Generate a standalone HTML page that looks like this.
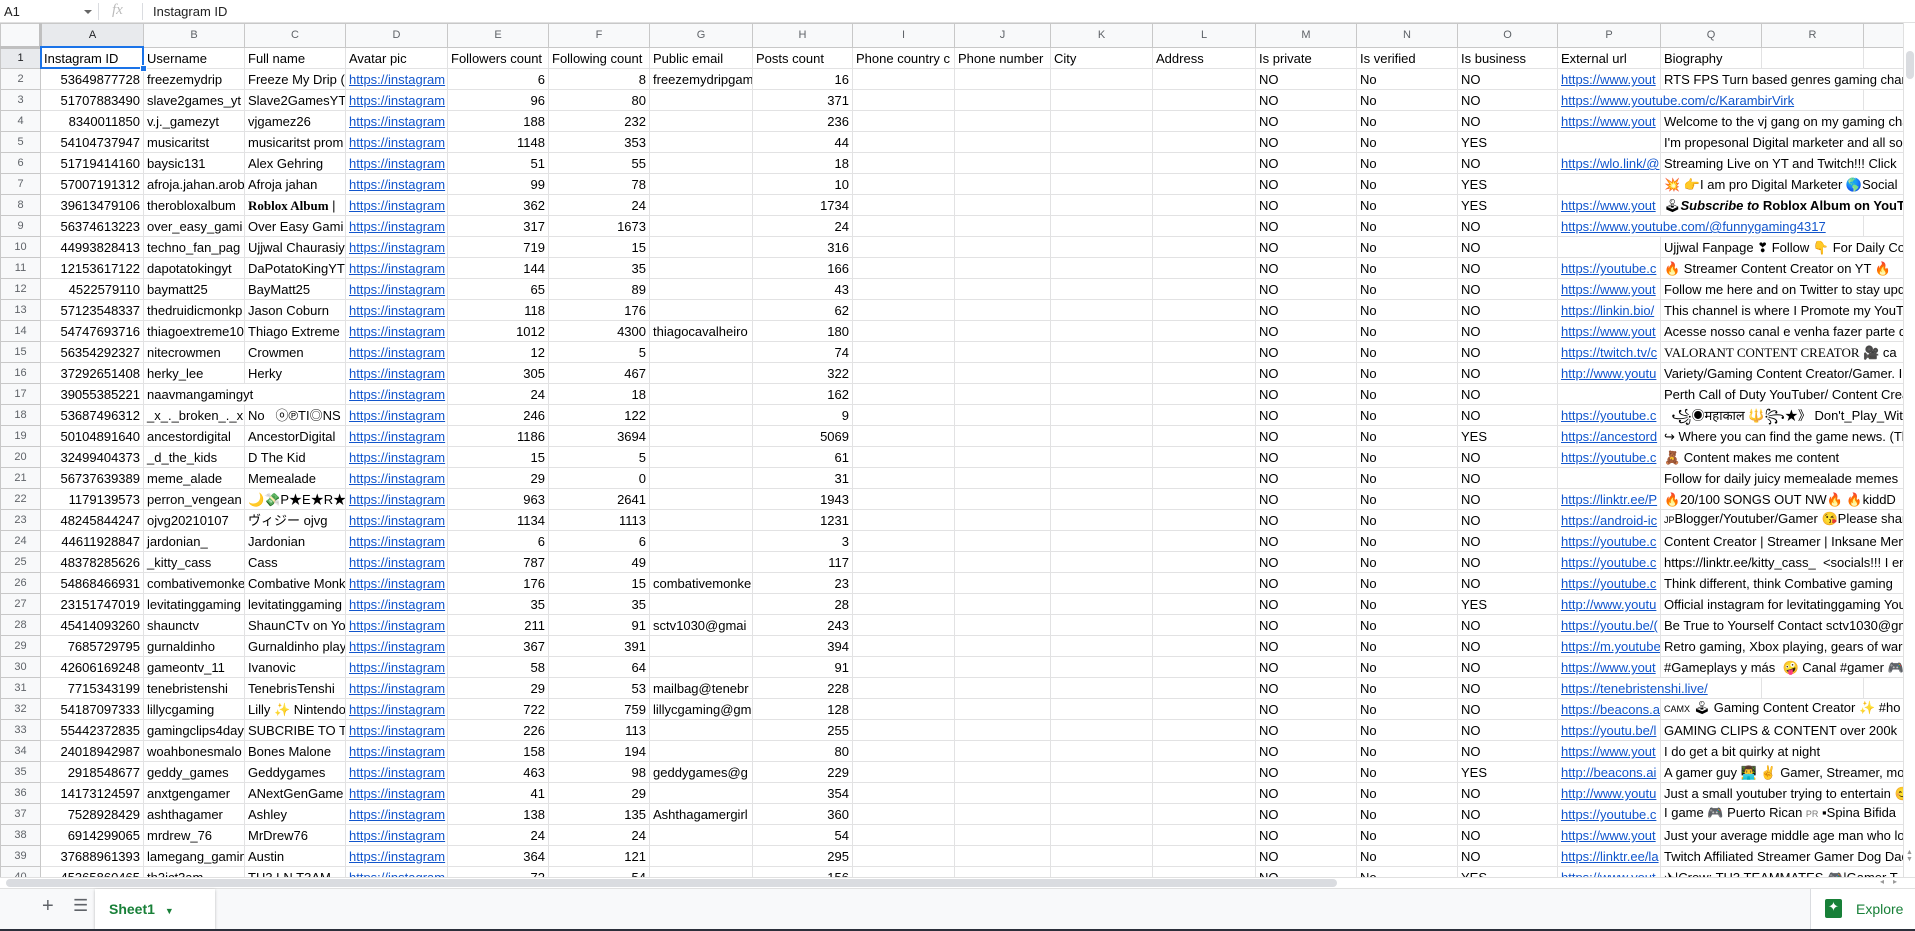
<!DOCTYPE html>
<html><head><meta charset="utf-8"><style>
*{box-sizing:border-box;margin:0;padding:0}
body{width:1915px;height:931px;overflow:hidden;background:#fff;font-family:"Liberation Sans","Noto Sans CJK JP",sans-serif;position:relative}
#fb{position:absolute;left:0;top:0;width:1915px;height:23px;border-bottom:1px solid #e0e0e0;font-size:13px;color:#222}
#fb .nm{position:absolute;left:4px;top:4px}
#fb .dd{position:absolute;left:84px;top:10px;border-left:4px solid transparent;border-right:4px solid transparent;border-top:4px solid #666}
#fb .s1{position:absolute;left:98px;top:3px;width:1px;height:17px;background:#dadce0}
#fb .fx{position:absolute;left:112px;top:2px;font-family:"Liberation Serif",serif;font-style:italic;color:#bbb;font-size:15px}
#fb .s2{position:absolute;left:142px;top:3px;width:1px;height:17px;background:#dadce0}
#fb .v{position:absolute;left:153px;top:4px}
#grid{position:absolute;left:0;top:23px;width:1903px;height:854px;overflow:hidden}
table{border-collapse:collapse;table-layout:fixed;width:1903px}
td,th{border:1px solid #e2e2e3;white-space:nowrap;overflow:hidden;font-size:13px;height:21px;padding:0 3px 1px;vertical-align:bottom;line-height:17px;color:#000;text-align:left;font-weight:normal}
th{background:#f8f9fa;color:#5f6368;font-size:11px;text-align:center;vertical-align:middle;border-color:#c8c8c8}
thead th{height:24px}
tbody th{padding:0}
th.sel{background:#e8eaed;color:#202124}
td.r{text-align:right}
td.l{color:#1155cc;text-decoration:underline}
.sv{font-family:"Liberation Serif",serif;font-weight:bold}
#a1{position:absolute;left:40px;top:46px;width:104px;height:23px;border:2px solid #1a73e8;pointer-events:none}
#a1 i{position:absolute;right:-5px;bottom:-5px;width:7px;height:7px;background:#1a73e8;border:1px solid #fff}
#vs{position:absolute;left:1903px;top:23px;width:12px;height:854px;background:#fff;border-left:1px solid #e0e0e0}
#vs .t{position:absolute;left:2px;top:28px;width:8px;height:28px;background:#dadce0;border-radius:4px}
#vs .u{position:absolute;left:2px;bottom:14px;color:#999;font-size:7px}
#hs{position:absolute;left:0;top:877px;width:1915px;height:11px;background:#fff;border-top:1px solid #e0e0e0}
#hs .t{position:absolute;left:6px;top:1px;width:1331px;height:8px;background:#dadce0;border-radius:4px}
#hs .a{position:absolute;top:-1px;color:#999;font-size:8px}
#tb{position:absolute;left:0;top:888px;width:1915px;height:41px;background:#f8f9fa;border-top:1px solid #e0e0e0}
#tb .plus{position:absolute;left:42px;top:6px;font-size:20px;color:#5f6368}
#tb .menu{position:absolute;left:73px;top:7px;font-size:17px;color:#5f6368}
#tb .tab{position:absolute;left:95px;top:0;width:120px;height:40px;background:#fff;box-shadow:0 1px 3px rgba(0,0,0,.25);color:#188038;font-size:14px;font-weight:bold;padding:12px 0 0 14px}
#tb .tab span{font-size:9px;margin-left:10px;color:#188038}
#tb .ex{position:absolute;left:1810px;top:0;width:105px;height:41px;border-left:1px solid #dadce0;background:#fff}
#tb .ex .ic{position:absolute;left:14px;top:10px;width:17px;height:19px;background:#188038;border-radius:2px}
#tb .ex .ic:after{content:"✦";position:absolute;left:3px;top:0;color:#fff;font-size:13px}
#tb .ex .tx{position:absolute;left:45px;top:12px;color:#188038;font-size:14px}
#bl{position:absolute;left:0;top:929px;width:1915px;height:2px;background:#2b2f3a}
</style></head><body>
<div id="fb"><span class="nm">A1</span><i class="dd"></i><i class="s1"></i><span class="fx">fx</span><i class="s2"></i><span class="v">Instagram ID</span></div>
<div id="grid"><table>
<colgroup><col style="width:40px"><col style="width:103px"><col style="width:101px"><col style="width:101px"><col style="width:102px"><col style="width:101px"><col style="width:101px"><col style="width:103px"><col style="width:100px"><col style="width:102px"><col style="width:96px"><col style="width:102px"><col style="width:103px"><col style="width:101px"><col style="width:101px"><col style="width:100px"><col style="width:103px"><col style="width:101px"><col style="width:102px"><col style="width:40px"></colgroup>
<thead><tr><th style="border-right:3px solid #c0c0c0;border-bottom:3px solid #c0c0c0"></th><th class="sel">A</th><th>B</th><th>C</th><th>D</th><th>E</th><th>F</th><th>G</th><th>H</th><th>I</th><th>J</th><th>K</th><th>L</th><th>M</th><th>N</th><th>O</th><th>P</th><th>Q</th><th>R</th><th></th></tr></thead>
<tbody>
<tr><th class="sel">1</th><td>Instagram ID</td><td>Username</td><td>Full name</td><td>Avatar pic</td><td>Followers count</td><td>Following count</td><td>Public email</td><td>Posts count</td><td>Phone country c</td><td>Phone number</td><td>City</td><td>Address</td><td>Is private</td><td>Is verified</td><td>Is business</td><td>External url</td><td>Biography</td><td></td><td></td></tr>
<tr><th>2</th><td class=r>53649877728</td><td>freezemydrip</td><td>Freeze My Drip (</td><td class=l>https://instagram</td><td class=r>6</td><td class=r>8</td><td>freezemydripgam</td><td class=r>16</td><td></td><td></td><td></td><td></td><td>NO</td><td>No</td><td>NO</td><td class=l>https://www.yout</td><td colspan=3>RTS FPS Turn based genres gaming channel</td></tr>
<tr><th>3</th><td class=r>51707883490</td><td>slave2games_yt</td><td>Slave2GamesYT</td><td class=l>https://instagram</td><td class=r>96</td><td class=r>80</td><td></td><td class=r>371</td><td></td><td></td><td></td><td></td><td>NO</td><td>No</td><td>NO</td><td class=l colspan=3>https://www.youtube.com/c/KarambirVirk</td><td></td></tr>
<tr><th>4</th><td class=r>8340011850</td><td>v.j._gamezyt</td><td>vjgamez26</td><td class=l>https://instagram</td><td class=r>188</td><td class=r>232</td><td></td><td class=r>236</td><td></td><td></td><td></td><td></td><td>NO</td><td>No</td><td>NO</td><td class=l>https://www.yout</td><td colspan=3>Welcome to the vj gang on my gaming channel</td></tr>
<tr><th>5</th><td class=r>54104737947</td><td>musicaritst</td><td>musicaritst prom</td><td class=l>https://instagram</td><td class=r>1148</td><td class=r>353</td><td></td><td class=r>44</td><td></td><td></td><td></td><td></td><td>NO</td><td>No</td><td>YES</td><td></td><td colspan=3>I'm propesonal Digital marketer and all social</td></tr>
<tr><th>6</th><td class=r>51719414160</td><td>baysic131</td><td>Alex Gehring</td><td class=l>https://instagram</td><td class=r>51</td><td class=r>55</td><td></td><td class=r>18</td><td></td><td></td><td></td><td></td><td>NO</td><td>No</td><td>NO</td><td class=l>https://wlo.link/@</td><td colspan=3>Streaming Live on YT and Twitch!!! Click</td></tr>
<tr><th>7</th><td class=r>57007191312</td><td>afroja.jahan.arob</td><td>Afroja jahan</td><td class=l>https://instagram</td><td class=r>99</td><td class=r>78</td><td></td><td class=r>10</td><td></td><td></td><td></td><td></td><td>NO</td><td>No</td><td>YES</td><td></td><td colspan=3>💥 👉I am pro Digital Marketer 🌎Social</td></tr>
<tr><th>8</th><td class=r>39613479106</td><td>therobloxalbum</td><td><span class=sv>Roblox Album</span> |</td><td class=l>https://instagram</td><td class=r>362</td><td class=r>24</td><td></td><td class=r>1734</td><td></td><td></td><td></td><td></td><td>NO</td><td>No</td><td>YES</td><td class=l>https://www.yout</td><td colspan=3>🕹<b><i>Subscribe to</i> Roblox Album on YouTube</b></td></tr>
<tr><th>9</th><td class=r>56374613223</td><td>over_easy_gami</td><td>Over Easy Gami</td><td class=l>https://instagram</td><td class=r>317</td><td class=r>1673</td><td></td><td class=r>24</td><td></td><td></td><td></td><td></td><td>NO</td><td>No</td><td>NO</td><td class=l colspan=3>https://www.youtube.com/@funnygaming4317</td><td></td></tr>
<tr><th>10</th><td class=r>44993828413</td><td>techno_fan_pag</td><td>Ujjwal Chaurasiy</td><td class=l>https://instagram</td><td class=r>719</td><td class=r>15</td><td></td><td class=r>316</td><td></td><td></td><td></td><td></td><td>NO</td><td>No</td><td>NO</td><td></td><td colspan=3>Ujjwal Fanpage ❣ Follow 👇 For Daily Content</td></tr>
<tr><th>11</th><td class=r>12153617122</td><td>dapotatokingyt</td><td>DaPotatoKingYT</td><td class=l>https://instagram</td><td class=r>144</td><td class=r>35</td><td></td><td class=r>166</td><td></td><td></td><td></td><td></td><td>NO</td><td>No</td><td>NO</td><td class=l>https://youtube.c</td><td colspan=3>🔥 Streamer Content Creator on YT 🔥</td></tr>
<tr><th>12</th><td class=r>4522579110</td><td>baymatt25</td><td>BayMatt25</td><td class=l>https://instagram</td><td class=r>65</td><td class=r>89</td><td></td><td class=r>43</td><td></td><td></td><td></td><td></td><td>NO</td><td>No</td><td>NO</td><td class=l>https://www.yout</td><td colspan=3>Follow me here and on Twitter to stay updated</td></tr>
<tr><th>13</th><td class=r>57123548337</td><td>thedruidicmonkp</td><td>Jason Coburn</td><td class=l>https://instagram</td><td class=r>118</td><td class=r>176</td><td></td><td class=r>62</td><td></td><td></td><td></td><td></td><td>NO</td><td>No</td><td>NO</td><td class=l>https://linkin.bio/</td><td colspan=3>This channel is where I Promote my YouTube</td></tr>
<tr><th>14</th><td class=r>54747693716</td><td>thiagoextreme10</td><td>Thiago Extreme</td><td class=l>https://instagram</td><td class=r>1012</td><td class=r>4300</td><td>thiagocavalheiro</td><td class=r>180</td><td></td><td></td><td></td><td></td><td>NO</td><td>No</td><td>NO</td><td class=l>https://www.yout</td><td colspan=3>Acesse nosso canal e venha fazer parte da</td></tr>
<tr><th>15</th><td class=r>56354292327</td><td>nitecrowmen</td><td>Crowmen</td><td class=l>https://instagram</td><td class=r>12</td><td class=r>5</td><td></td><td class=r>74</td><td></td><td></td><td></td><td></td><td>NO</td><td>No</td><td>NO</td><td class=l>https://twitch.tv/c</td><td colspan=3><span style="font-family:'Liberation Serif',serif">VALORANT CONTENT CREATOR</span> 🎥 ca</td></tr>
<tr><th>16</th><td class=r>37292651408</td><td>herky_lee</td><td>Herky</td><td class=l>https://instagram</td><td class=r>305</td><td class=r>467</td><td></td><td class=r>322</td><td></td><td></td><td></td><td></td><td>NO</td><td>No</td><td>NO</td><td class=l>http://www.youtu</td><td colspan=3>Variety/Gaming Content Creator/Gamer. I</td></tr>
<tr><th>17</th><td class=r>39055385221</td><td colspan=2>naavmangamingyt</td><td class=l>https://instagram</td><td class=r>24</td><td class=r>18</td><td></td><td class=r>162</td><td></td><td></td><td></td><td></td><td>NO</td><td>No</td><td>NO</td><td></td><td colspan=3>Perth Call of Duty YouTuber/ Content Creator</td></tr>
<tr><th>18</th><td class=r>53687496312</td><td>_x_._broken_._x</td><td>No &nbsp; ⓞ℗TI◎NS</td><td class=l>https://instagram</td><td class=r>246</td><td class=r>122</td><td></td><td class=r>9</td><td></td><td></td><td></td><td></td><td>NO</td><td>No</td><td>NO</td><td class=l>https://youtube.c</td><td colspan=3>&nbsp; ꧁◉महाकाल 🔱꧂★》 Don't_Play_With</td></tr>
<tr><th>19</th><td class=r>50104891640</td><td>ancestordigital</td><td>AncestorDigital</td><td class=l>https://instagram</td><td class=r>1186</td><td class=r>3694</td><td></td><td class=r>5069</td><td></td><td></td><td></td><td></td><td>NO</td><td>No</td><td>YES</td><td class=l>https://ancestord</td><td colspan=3>↪ Where you can find the game news. (The</td></tr>
<tr><th>20</th><td class=r>32499404373</td><td>_d_the_kids</td><td>D The Kid</td><td class=l>https://instagram</td><td class=r>15</td><td class=r>5</td><td></td><td class=r>61</td><td></td><td></td><td></td><td></td><td>NO</td><td>No</td><td>NO</td><td class=l>https://youtube.c</td><td colspan=3>🧸 Content makes me content</td></tr>
<tr><th>21</th><td class=r>56737639389</td><td>meme_alade</td><td>Memealade</td><td class=l>https://instagram</td><td class=r>29</td><td class=r>0</td><td></td><td class=r>31</td><td></td><td></td><td></td><td></td><td>NO</td><td>No</td><td>NO</td><td></td><td colspan=3>Follow for daily juicy memealade memes</td></tr>
<tr><th>22</th><td class=r>1179139573</td><td>perron_vengean</td><td>🌙💸P★E★R★O</td><td class=l>https://instagram</td><td class=r>963</td><td class=r>2641</td><td></td><td class=r>1943</td><td></td><td></td><td></td><td></td><td>NO</td><td>No</td><td>NO</td><td class=l>https://linktr.ee/P</td><td colspan=3>🔥20/100 SONGS OUT NW🔥 🔥kiddD</td></tr>
<tr><th>23</th><td class=r>48245844247</td><td>ojvg20210107</td><td>ヴィジー ojvg</td><td class=l>https://instagram</td><td class=r>1134</td><td class=r>1113</td><td></td><td class=r>1231</td><td></td><td></td><td></td><td></td><td>NO</td><td>No</td><td>NO</td><td class=l>https://android-ic</td><td colspan=3><small style="font-size:9px">JP</small>Blogger/Youtuber/Gamer 😘Please share</td></tr>
<tr><th>24</th><td class=r>44611928847</td><td>jardonian_</td><td>Jardonian</td><td class=l>https://instagram</td><td class=r>6</td><td class=r>6</td><td></td><td class=r>3</td><td></td><td></td><td></td><td></td><td>NO</td><td>No</td><td>NO</td><td class=l>https://youtube.c</td><td colspan=3>Content Creator | Streamer | Inksane Member</td></tr>
<tr><th>25</th><td class=r>48378285626</td><td>_kitty_cass</td><td>Cass</td><td class=l>https://instagram</td><td class=r>787</td><td class=r>49</td><td></td><td class=r>117</td><td></td><td></td><td></td><td></td><td>NO</td><td>No</td><td>NO</td><td class=l>https://youtube.c</td><td colspan=3>https://linktr.ee/kitty_cass_ &nbsp;&lt;socials!!! I enjoy</td></tr>
<tr><th>26</th><td class=r>54868466931</td><td>combativemonke</td><td>Combative Monk</td><td class=l>https://instagram</td><td class=r>176</td><td class=r>15</td><td>combativemonke</td><td class=r>23</td><td></td><td></td><td></td><td></td><td>NO</td><td>No</td><td>NO</td><td class=l>https://youtube.c</td><td colspan=3>Think different, think Combative gaming</td></tr>
<tr><th>27</th><td class=r>23151747019</td><td>levitatinggaming</td><td>levitatinggaming</td><td class=l>https://instagram</td><td class=r>35</td><td class=r>35</td><td></td><td class=r>28</td><td></td><td></td><td></td><td></td><td>NO</td><td>No</td><td>YES</td><td class=l>http://www.youtu</td><td colspan=3>Official instagram for levitatinggaming YouTube</td></tr>
<tr><th>28</th><td class=r>45414093260</td><td>shaunctv</td><td>ShaunCTv on Yo</td><td class=l>https://instagram</td><td class=r>211</td><td class=r>91</td><td>sctv1030@gmai</td><td class=r>243</td><td></td><td></td><td></td><td></td><td>NO</td><td>No</td><td>NO</td><td class=l>https://youtu.be/(</td><td colspan=3>Be True to Yourself Contact sctv1030@gmail</td></tr>
<tr><th>29</th><td class=r>7685729795</td><td>gurnaldinho</td><td>Gurnaldinho play</td><td class=l>https://instagram</td><td class=r>367</td><td class=r>391</td><td></td><td class=r>394</td><td></td><td></td><td></td><td></td><td>NO</td><td>No</td><td>NO</td><td class=l>https://m.youtube</td><td colspan=3>Retro gaming, Xbox playing, gears of war</td></tr>
<tr><th>30</th><td class=r>42606169248</td><td>gameontv_11</td><td>Ivanovic</td><td class=l>https://instagram</td><td class=r>58</td><td class=r>64</td><td></td><td class=r>91</td><td></td><td></td><td></td><td></td><td>NO</td><td>No</td><td>NO</td><td class=l>https://www.yout</td><td colspan=3>#Gameplays y más &nbsp;🤪 Canal #gamer 🎮</td></tr>
<tr><th>31</th><td class=r>7715343199</td><td>tenebristenshi</td><td>TenebrisTenshi</td><td class=l>https://instagram</td><td class=r>29</td><td class=r>53</td><td>mailbag@tenebr</td><td class=r>228</td><td></td><td></td><td></td><td></td><td>NO</td><td>No</td><td>NO</td><td class=l colspan=2>https://tenebristenshi.live/</td><td></td><td></td></tr>
<tr><th>32</th><td class=r>54187097333</td><td>lillycgaming</td><td>Lilly ✨ Nintendo</td><td class=l>https://instagram</td><td class=r>722</td><td class=r>759</td><td>lillycgaming@gm</td><td class=r>128</td><td></td><td></td><td></td><td></td><td>NO</td><td>No</td><td>NO</td><td class=l>https://beacons.a</td><td colspan=3><small style="font-size:9px">CAMX</small> 🕹 Gaming Content Creator ✨ #ho</td></tr>
<tr><th>33</th><td class=r>55442372835</td><td>gamingclips4day</td><td>SUBCRIBE TO T</td><td class=l>https://instagram</td><td class=r>226</td><td class=r>113</td><td></td><td class=r>255</td><td></td><td></td><td></td><td></td><td>NO</td><td>No</td><td>NO</td><td class=l>https://youtu.be/l</td><td colspan=3>GAMING CLIPS &amp; CONTENT over 200k</td></tr>
<tr><th>34</th><td class=r>24018942987</td><td>woahbonesmalo</td><td>Bones Malone</td><td class=l>https://instagram</td><td class=r>158</td><td class=r>194</td><td></td><td class=r>80</td><td></td><td></td><td></td><td></td><td>NO</td><td>No</td><td>NO</td><td class=l>https://www.yout</td><td colspan=3>I do get a bit quirky at night</td></tr>
<tr><th>35</th><td class=r>2918548677</td><td>geddy_games</td><td>Geddygames</td><td class=l>https://instagram</td><td class=r>463</td><td class=r>98</td><td>geddygames@g</td><td class=r>229</td><td></td><td></td><td></td><td></td><td>NO</td><td>No</td><td>YES</td><td class=l>http://beacons.ai</td><td colspan=3>A gamer guy 👨‍💻 ✌ Gamer, Streamer, more</td></tr>
<tr><th>36</th><td class=r>14173124597</td><td>anxtgengamer</td><td>ANextGenGame</td><td class=l>https://instagram</td><td class=r>41</td><td class=r>29</td><td></td><td class=r>354</td><td></td><td></td><td></td><td></td><td>NO</td><td>No</td><td>NO</td><td class=l>http://www.youtu</td><td colspan=3>Just a small youtuber trying to entertain 😊</td></tr>
<tr><th>37</th><td class=r>7528928429</td><td>ashthagamer</td><td>Ashley</td><td class=l>https://instagram</td><td class=r>138</td><td class=r>135</td><td>Ashthagamergirl</td><td class=r>360</td><td></td><td></td><td></td><td></td><td>NO</td><td>No</td><td>NO</td><td class=l>https://youtube.c</td><td colspan=3>I game 🎮 Puerto Rican <small style="font-size:9px;color:#777">PR</small> ▪Spina Bifida</td></tr>
<tr><th>38</th><td class=r>6914299065</td><td>mrdrew_76</td><td>MrDrew76</td><td class=l>https://instagram</td><td class=r>24</td><td class=r>24</td><td></td><td class=r>54</td><td></td><td></td><td></td><td></td><td>NO</td><td>No</td><td>NO</td><td class=l>https://www.yout</td><td colspan=3>Just your average middle age man who loves</td></tr>
<tr><th>39</th><td class=r>37688961393</td><td>lamegang_gamin</td><td>Austin</td><td class=l>https://instagram</td><td class=r>364</td><td class=r>121</td><td></td><td class=r>295</td><td></td><td></td><td></td><td></td><td>NO</td><td>No</td><td>NO</td><td class=l>https://linktr.ee/la</td><td colspan=3>Twitch Affiliated Streamer Gamer Dog Dad</td></tr>
<tr><th>40</th><td class=r>45365860465</td><td>th3ict3am</td><td>TH3 LN T3AM</td><td class=l>https://instagram</td><td class=r>72</td><td class=r>54</td><td></td><td class=r>156</td><td></td><td></td><td></td><td></td><td>NO</td><td>No</td><td>YES</td><td class=l>https://www.yout</td><td colspan=3>✈|Crew: TH3 TEAMMATES 🎮|Gamer T</td></tr>
</tbody></table></div>
<div id="a1"><i></i></div>
<div id="vs"><div class="t"></div><div class="u">▲<br>▼</div></div>
<div id="hs"><div class="t"></div><span class="a" style="left:1880px">◂</span><span class="a" style="left:1893px">▸</span></div>
<div id="tb"><span class="plus">+</span><span class="menu">☰</span><div class="tab">Sheet1<span>▼</span></div><div class="ex"><div class="ic"></div><span class="tx">Explore</span></div></div>
<div id="bl"></div>
</body></html>
